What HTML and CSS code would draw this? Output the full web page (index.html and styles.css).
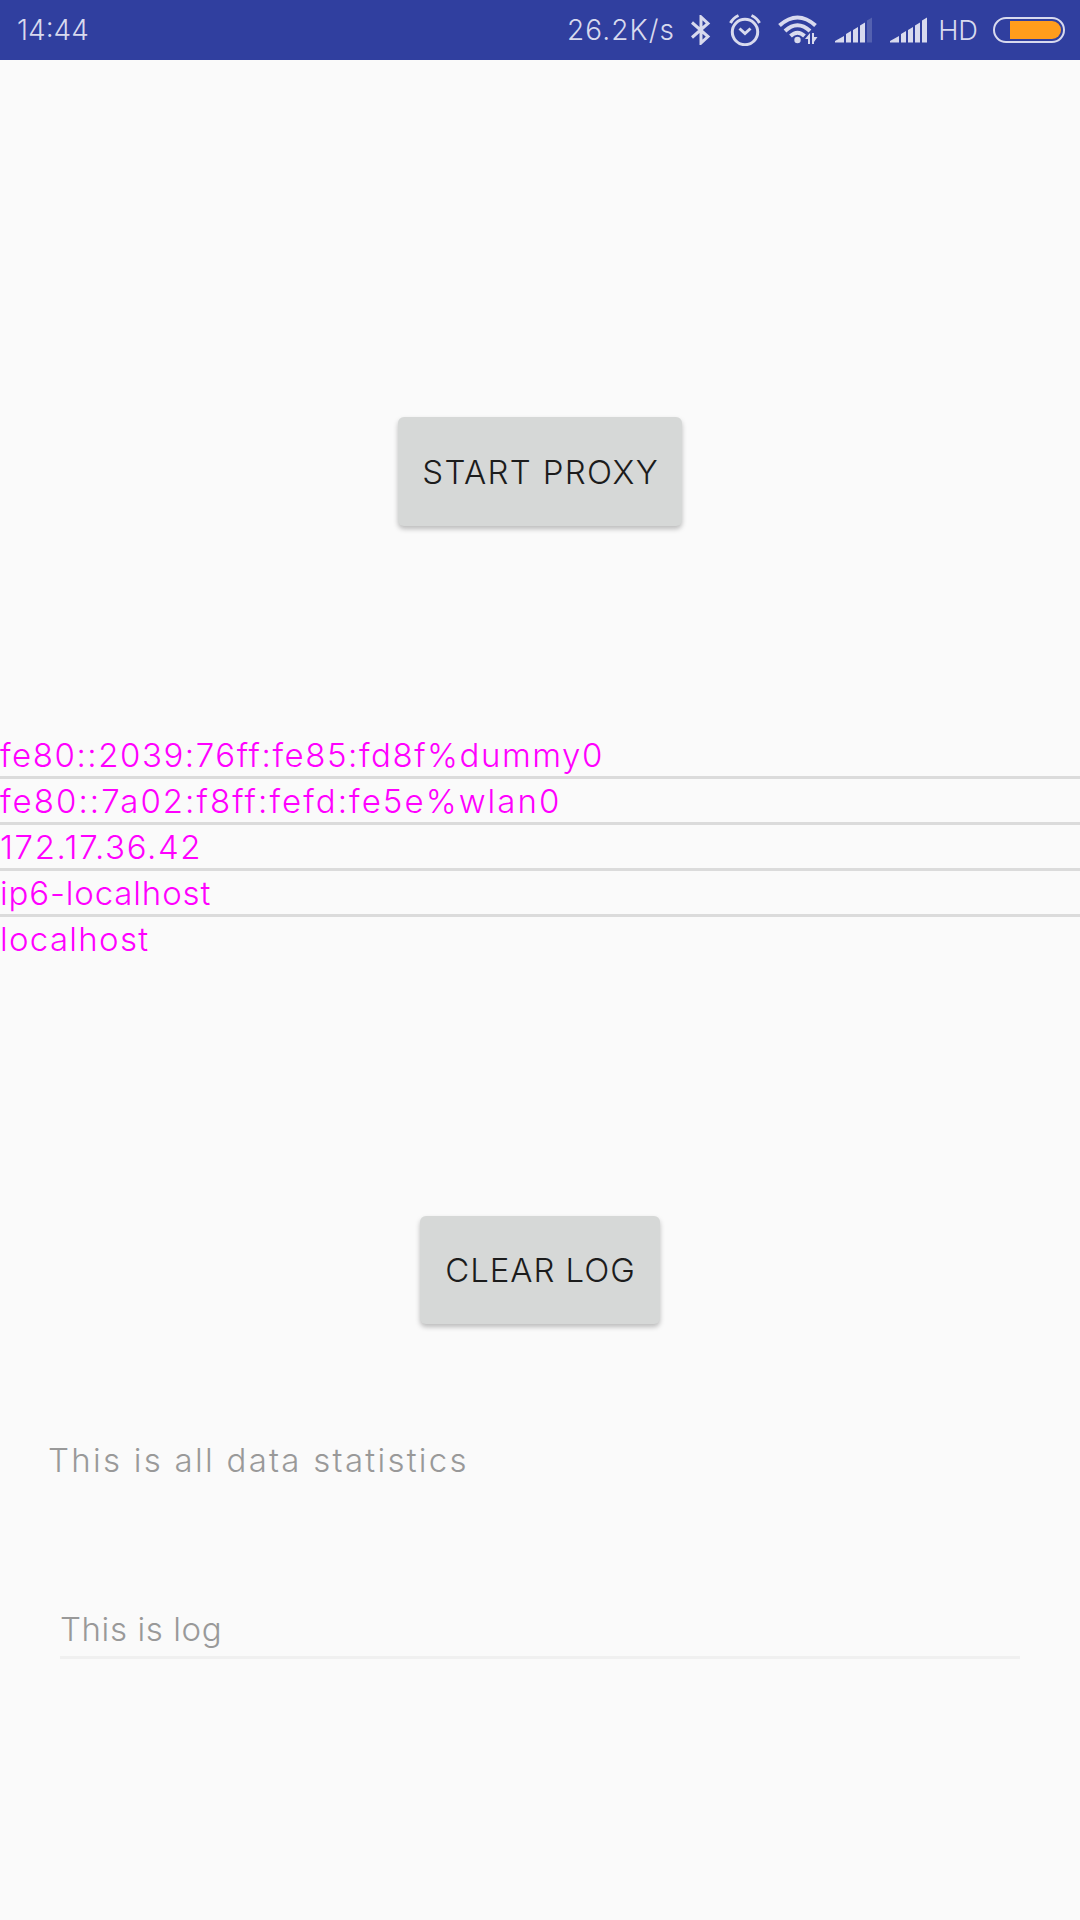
FILE: index.html
```html
<!DOCTYPE html>
<html lang="en">
<head>
<meta charset="utf-8">
<title>Proxy</title>
<link rel="stylesheet" href="styles.css">
</head>
<body>
<header class="status">
  <span class="clock">14:44</span>
  <div class="indicators">
    <span class="speed">26.2K/s</span>
    <svg class="bluetooth" width="20" height="30" viewBox="0 0 20 30" fill="none" stroke="#d8daee" stroke-width="3"><path d="M1 7.500L17 21.500L10 28V2L17 8.500L1 22.500"/></svg>
    <svg class="alarm" width="32" height="32" viewBox="0 0 32 32" fill="none" stroke="#d8daee" stroke-width="3"><circle cx="16" cy="18" r="12.700"/><path d="M10.500 14.500L16 19.500L21.500 14.500M1.500 9Q4 4 9.500 1.500M30.500 9Q28 4 22.500 1.500"/></svg>
    <svg class="wifi" width="40" height="30" viewBox="0 0 40 30" fill="none" stroke="#d8daee" stroke-width="4"><path d="M1.500 10.500Q19.500-5.500 37.500 10.500M7 16Q19.500 4.500 32 16M12.500 21Q19.500 14.500 26.500 21"/><circle cx="19.500" cy="25" r="3.200" fill="#d8daee" stroke="none"/><path d="M27 24L32 18V29H30V24ZM34 18H36V22H39.500L36 27V29H34Z" fill="#d8daee" stroke="none"/></svg>
    <svg class="signal" width="37" height="26" viewBox="0 0 37 26" fill="#d8daee"><path d="M0 25.500V24L9 19V25.500ZM11 25.500V17L16 14V25.500ZM18 25.500V13L23 10V25.500ZM25 25.500V8.500L30 5.500V25.500Z"/><path d="M32 25.500V3.500L37 .5V25.500Z" opacity=".22"/></svg>
    <svg class="signal signal-second" width="37" height="26" viewBox="0 0 37 26" fill="#d8daee"><path d="M0 25.500V24L9 19V25.500ZM11 25.500V17L16 14V25.500ZM18 25.500V13L23 10V25.500ZM25 25.500V8.500L30 5.500V25.500ZM32 25.500V3.500L37 .5V25.500Z"/></svg>
    <span class="hd">HD</span>
    <svg class="battery" width="72" height="26" viewBox="0 0 72 26"><rect x="1" y="1" width="70" height="24" rx="12" fill="none" stroke="#d8daee" stroke-width="2"/><path d="M17 4H59A9 9 0 0 1 59 22H17Z" fill="#ff9d1c"/></svg>
  </div>
</header>
<main class="screen">
  <button class="button start"><span class="start-label">START PROXY</span></button>
  <ul class="addresses">
    <li class="dummy">fe80::2039:76ff:fe85:fd8f%dummy0</li>
    <li class="wlan">fe80::7a02:f8ff:fefd:fe5e%wlan0</li>
    <li class="ipv4">172.17.36.42</li>
    <li class="ip6-local">ip6-localhost</li>
    <li class="local">localhost</li>
  </ul>
  <button class="button clear"><span class="clear-label">CLEAR LOG</span></button>
  <p class="stats">This is all data statistics</p>
  <div class="log">This is log</div>
</main>
</body>
</html>
```
FILE: styles.css
```css
* { box-sizing: border-box; }
body { margin: 0; width: 1080px; height: 1920px; overflow: hidden; background: #fafafa; font-family: Inter, "Liberation Sans", sans-serif; font-weight: 300; font-size: 33px; }
.status { height: 60px; background: #303f9f; color: #d8daee; display: flex; justify-content: space-between; align-items: center; padding: 0 15px 0 17px; font-size: 28px; }
.indicators { display: flex; align-items: center; }
.speed { letter-spacing: 1.1px; }
.bluetooth { margin-left: 16px; }
.alarm { margin-left: 18px; }
.wifi { margin-left: 17px; }
.signal { margin-left: 17px; }
.signal-second { margin-left: 18px; }
.hd { margin-left: 11px; font-size: 27.3px; }
.battery { margin-left: 15px; }
.screen { display: flex; flex-direction: column; align-items: center; }
.button { border: 0; border-radius: 6px; background: #d6d8d7; color: #1c1c1c; font: inherit; padding: 0; box-shadow: 0 3px 5px rgba(0,0,0,.25); white-space: nowrap; }
.start { width: 284px; height: 109px; margin-top: 357px; }
.start-label { letter-spacing: 1.35px; margin-right: -1.35px; }
.addresses { list-style: none; margin: 207px 0 0; padding: 0; width: 100%; color: #f0f; }
.addresses li { height: 46px; padding-top: 1px; line-height: 42px; border-bottom: 3px solid #dbdbdb; }
.addresses li:last-child { border-bottom: 0; }
.dummy { letter-spacing: 1.55px; }
.wlan { letter-spacing: 2.05px; }
.ipv4 { letter-spacing: 1.6px; }
.ip6-local { letter-spacing: .85px; }
.local { letter-spacing: 1.3px; }
.clear { width: 240px; height: 108px; margin-top: 253px; }
.clear-label { letter-spacing: .95px; margin-right: -.95px; }
.stats { margin: 116px 0 0; width: 984px; line-height: 40px; color: #999; letter-spacing: 2.27px; }
.log { margin-top: 128px; padding-top: 1px; width: 960px; height: 51px; line-height: 40px; color: #999; letter-spacing: .6px; border-bottom: 3px solid #f0f0f0; }
```
